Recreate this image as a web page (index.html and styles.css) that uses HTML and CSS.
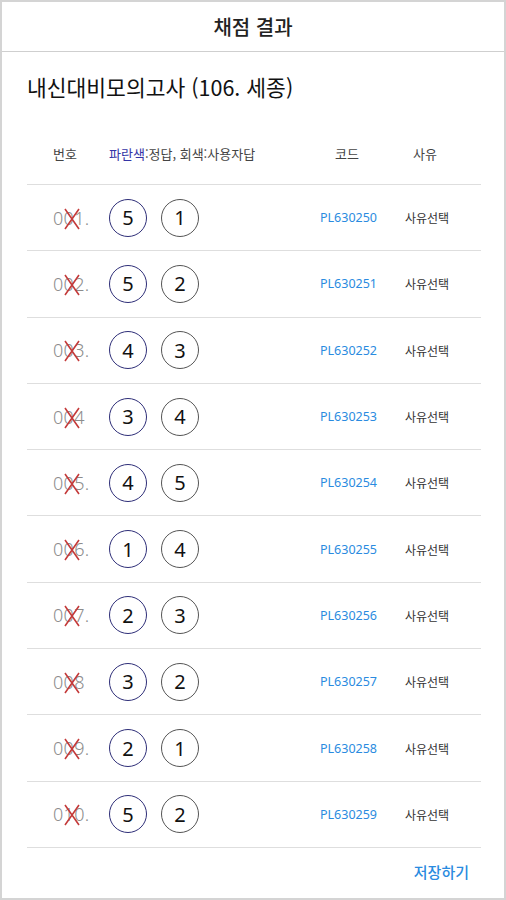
FILE: index.html
```html
<!DOCTYPE html>
<html lang="ko">
  <head>
    <meta charset="UTF-8" />
    <meta name="viewport" content="width=device-width, initial-scale=1.0" />
    <title>채점 결과</title>
    <link rel="stylesheet" href="styles.css">
  </head>
  <body>
    <div class="frame">
      <div class="topbar">채점 결과</div>
      <div class="content">
        <h2 class="exam-title">내신대비모의고사 (106. 세종)</h2>
        <div class="table-head">
          <span class="col-num">번호</span>
          <span class="col-answer"><b class="legend-blue">파란색</b>:정답, 회색:사용자답</span>
          <span class="col-code">코드</span>
          <span class="col-reason">사유</span>
        </div>
        <div class="rows" id="rows"></div>
        <div class="footer">
          <a class="save-btn" href="#">저장하기</a>
        </div>
      </div>
    </div>

    <script>
      // 문항 데이터: [정답, 사용자답]
      const items = [
        [5, 1], [5, 2], [4, 3], [3, 4], [4, 5],
        [1, 4], [2, 3], [3, 2], [2, 1], [5, 2]
      ];
      const noDot = [4, 8]; // 원본 화면에서 마침표가 빠진 문항

      const xMark =
        '<svg class="wrong" viewBox="0 0 18 24" width="18" height="24">' +
        '<path d="M2 2 L16 22 M16 2 L2 22" stroke="#c43a3a" stroke-width="1.6" fill="none"/></svg>';

      const rows = document.getElementById("rows");
      items.forEach(function (it, i) {
        const n = i + 1;
        const num = String(n).padStart(3, "0") + (noDot.includes(n) ? "" : ".");
        const row = document.createElement("div");
        row.className = "row";
        row.innerHTML =
          '<span class="col-num num">' + num + xMark + '</span>' +
          '<span class="col-answer answers">' +
            '<span class="circle correct">' + it[0] + '</span>' +
            '<span class="circle user">' + it[1] + '</span>' +
          '</span>' +
          '<span class="col-code code">PL6302' + (50 + i) + '</span>' +
          '<span class="col-reason reason">사유선택</span>';
        rows.appendChild(row);
      });
    </script>
  </body>
</html>
```

FILE: styles.css
```css
body {
  margin: 0;
  background-color: #d4d4d4;
  font-family: "Noto Sans", "Noto Sans CJK KR", sans-serif;
  color: #222;
}
.frame {
  margin: 2px;
  height: 896px;
  background-color: #fff;
  overflow: hidden;
}
.topbar {
  height: 49px;
  line-height: 49px;
  text-align: center;
  font-family: "Noto Sans CJK KR", sans-serif;
  font-size: 20px;
  font-weight: 500;
  color: #222;
  border-bottom: 1px solid #cfcfcf;
}
.content {
  padding: 0 23px 0 25px;
}
.exam-title {
  margin: 0;
  padding-top: 20px;
  height: 50px;
  font-family: "Noto Sans CJK KR", sans-serif;
  font-size: 21.5px;
  font-weight: 400;
  color: #111;
  line-height: 30px;
}
.table-head,
.row {
  display: flex;
  align-items: center;
  padding-left: 26px;
}
.table-head {
  height: 62px;
  font-family: "Noto Sans CJK KR", sans-serif;
  font-size: 13px;
  color: #444;
  border-bottom: 1px solid #dedede;
}
.legend-blue {
  font-weight: 400;
  color: #3434a6;
}
.col-num {
  width: 56px;
  flex: none;
}
.col-answer {
  width: 211px;
  flex: none;
}
.col-code {
  width: 85px;
  flex: none;
}
.col-reason {
  flex: none;
}
.table-head .col-code {
  padding-left: 15px;
  width: 78px;
}
.row {
  height: 65.3px;
  border-bottom: 1px solid #dedede;
}
.num {
  position: relative;
  font-size: 18px;
  font-weight: 300;
  color: #8c8c8c;
  letter-spacing: 0.3px;
}
.wrong {
  position: absolute;
  left: 10px;
  top: 1px;
}
.answers {
  display: flex;
  gap: 14px;
}
.circle {
  width: 36px;
  height: 36px;
  border-radius: 50%;
  display: flex;
  align-items: center;
  justify-content: center;
  font-size: 20px;
  color: #111;
}
.circle.correct {
  border: 1.4px solid #2e2e78;
}
.circle.user {
  border: 1.4px solid #555;
}
.code {
  font-size: 12.5px;
  color: #2a8be0;
}
.reason {
  font-family: "Noto Sans CJK KR", sans-serif;
  font-size: 12px;
  color: #333;
}
.footer {
  display: flex;
  justify-content: flex-end;
  padding: 13px 12px 0 0;
}
.save-btn {
  font-family: "Noto Sans CJK KR", sans-serif;
  font-size: 15px;
  font-weight: 500;
  color: #2a8be0;
  text-decoration: none;
}
```
